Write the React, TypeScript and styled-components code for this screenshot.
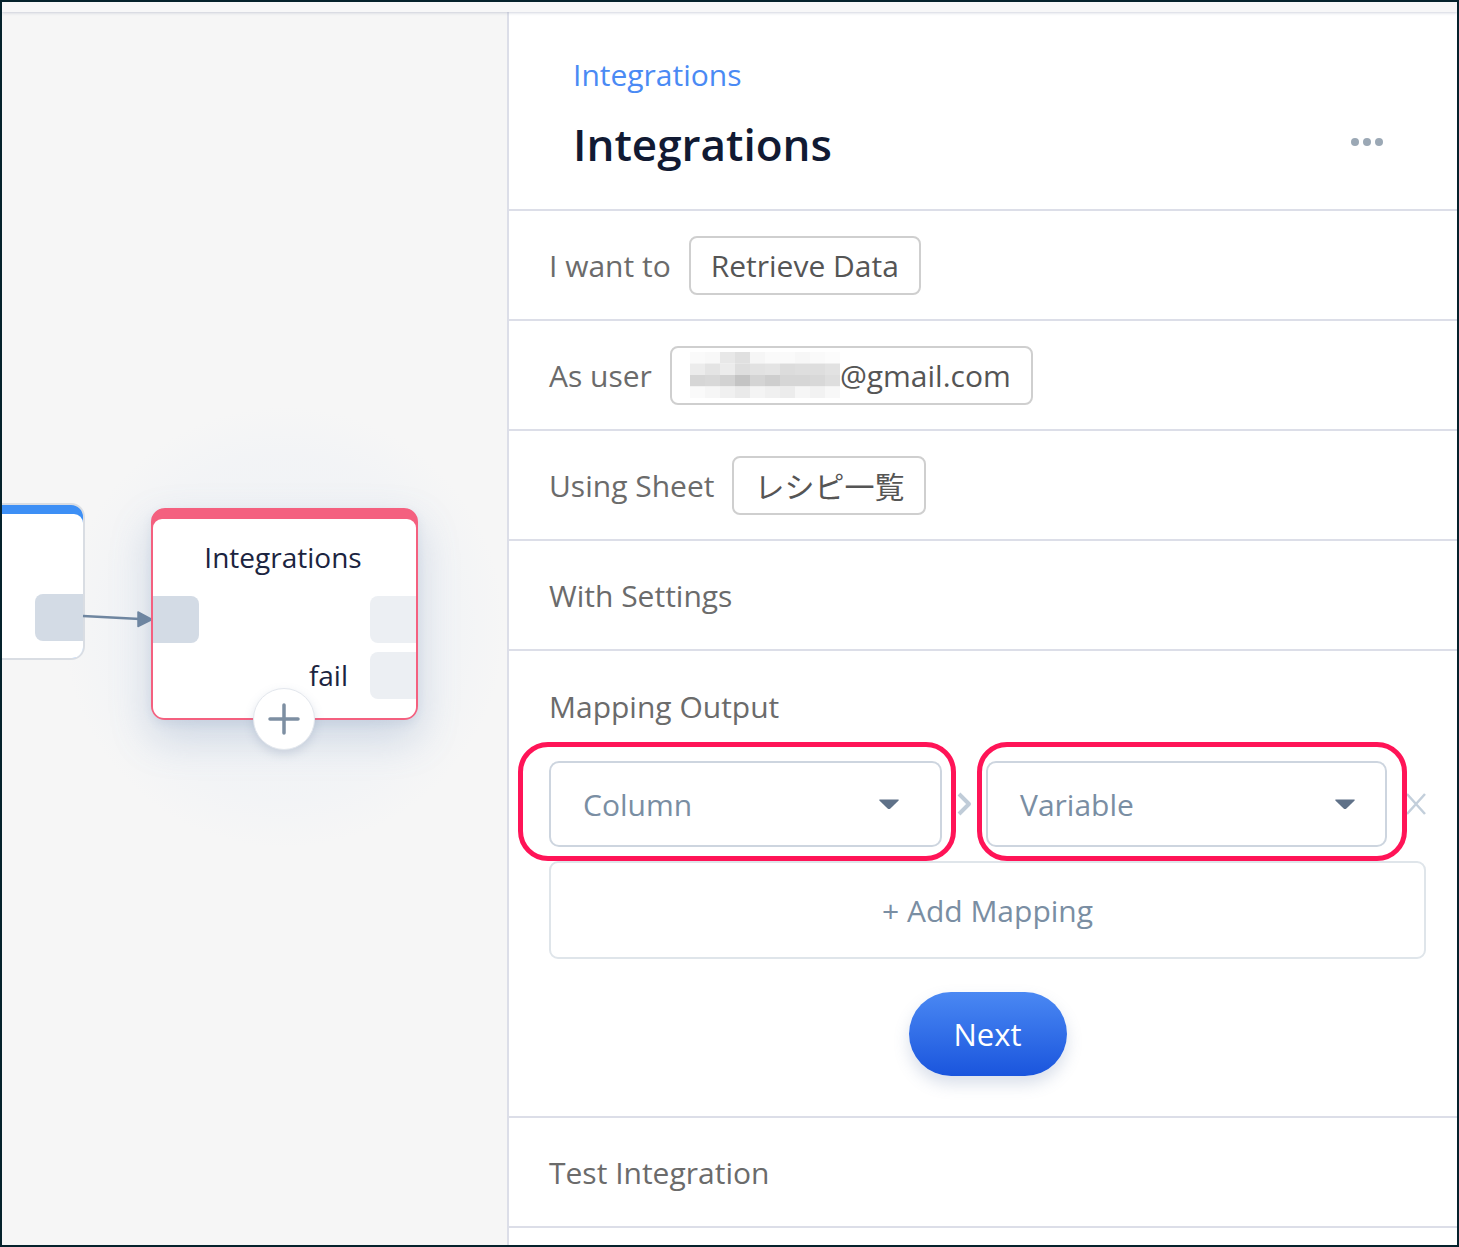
import React from "react";
import styled, { createGlobalStyle } from "styled-components";

const Global = createGlobalStyle`
  html, body { margin: 0; padding: 0; background: #05222c; }
  * { box-sizing: border-box; }
  body { font-family: "Open Sans", "Noto Sans", sans-serif; }
`;

const Frame = styled.div`
  width: 1459px;
  height: 1247px;
  border: 2px solid #05222c;
  display: flex;
  flex-direction: column;
  overflow: hidden;
  background: #fff;
`;

const TopStrip = styled.div`
  height: 10px;
  flex: none;
  background: #f7f7f8;
  box-shadow: 0 1px 3px rgba(150, 160, 185, 0.45);
  position: relative;
  z-index: 2;
`;

const Main = styled.div`
  flex: 1;
  display: flex;
  min-height: 0;
`;

const Canvas = styled.div`
  width: 505px;
  flex: none;
  background: #f6f6f6;
  position: relative;
  overflow: hidden;
`;

const Glow = styled.div`
  position: absolute;
  left: 62px;
  top: 395px;
  width: 440px;
  height: 440px;
  border-radius: 50%;
  background: radial-gradient(circle, rgba(238, 241, 245, 0.95) 0%, rgba(241, 243, 246, 0.7) 55%, rgba(246, 246, 246, 0) 71%);
`;

const NodeShell = styled.div<{ $accent: string; $edge: string }>`
  position: absolute;
  background: ${(p) => p.$accent};
  border: 2px solid ${(p) => p.$edge};
  border-radius: 14px;
  padding-top: 9px;
  display: flex;
`;

const NodeBody = styled.div`
  flex: 1;
  background: #fff;
  border-radius: 9px 9px 11px 11px;
  position: relative;
`;

const PrevNode = styled(NodeShell)`
  left: -40px;
  top: 491px;
  width: 123px;
  height: 157px;
`;

const MainNode = styled(NodeShell)`
  left: 149px;
  top: 496px;
  width: 267px;
  height: 212px;
  box-shadow: 0 18px 40px rgba(110, 140, 180, 0.28), 0 4px 10px rgba(110, 140, 180, 0.12);
`;

const Port = styled.div<{ $tone: string; $side: "left" | "right"; $top: number; $w?: number }>`
  position: absolute;
  top: ${(p) => p.$top}px;
  width: ${(p) => p.$w ?? 46}px;
  height: 47px;
  background: ${(p) => p.$tone};
  ${(p) => (p.$side === "left" ? "left: 0; border-radius: 0 8px 8px 0;" : "right: 0; border-radius: 8px 0 0 8px;")}
`;

const NodeTitle = styled.div`
  text-align: center;
  font-size: 28px;
  color: #1b2440;
  margin-top: 19px;
  padding-right: 3px;
`;

const FailLabel = styled.div`
  position: absolute;
  right: 68px;
  top: 137px;
  font-size: 28px;
  color: #1b2440;
`;

const PlusButton = styled.div`
  position: absolute;
  left: 100px;
  bottom: -32px;
  width: 62px;
  height: 62px;
  border-radius: 50%;
  background: #fff;
  border: 1px solid #e3e7ed;
  box-shadow: 0 4px 10px rgba(120, 140, 170, 0.25);
  display: flex;
  align-items: center;
  justify-content: center;
`;

const Arrow = styled.svg`
  position: absolute;
  left: 80px;
  top: 594px;
`;

const Panel = styled.div`
  flex: 1;
  border-left: 2px solid #dcdee8;
  display: flex;
  flex-direction: column;
  background: #fff;
`;

const Header = styled.div`
  height: 199px;
  flex: none;
  border-bottom: 2px solid #dcdee8;
  padding: 43px 72px 0 64px;
`;

const Breadcrumb = styled.div`
  font-size: 30px;
  color: #4a8af4;
  line-height: 40px;
`;

const TitleRow = styled.div`
  display: flex;
  align-items: center;
  justify-content: space-between;
  margin-top: 19px;
`;

const Title = styled.h1`
  margin: 0;
  font-size: 44px;
  font-weight: 600;
  color: #111a33;
  line-height: 60px;
`;

const Dots = styled.div`
  display: flex;
  gap: 4px;
  margin-right: 2px;
  padding-bottom: 4px;
`;

const Dot = styled.span`
  width: 8px;
  height: 8px;
  border-radius: 50%;
  background: #9ba8b5;
`;

const Row = styled.div`
  height: 110px;
  flex: none;
  border-bottom: 2px solid #dcdee8;
  display: flex;
  align-items: center;
  gap: 18px;
  padding-left: 40px;
`;

const Label = styled.div`
  font-size: 30px;
  color: #6b6b6b;
`;

const ValueBox = styled.div<{ $padLeft?: number }>`
  height: 59px;
  border: 2px solid #cfcfcf;
  border-radius: 8px;
  padding: 0 20px 0 ${(p) => p.$padLeft ?? 20}px;
  display: flex;
  align-items: center;
  font-size: 30px;
  color: #555;
  font-family: "Open Sans", "Noto Sans CJK JP", sans-serif;
`;

const Mosaic = styled.svg`
  display: block;
`;

const MappingSection = styled.div`
  flex: none;
  border-bottom: 2px solid #dcdee8;
  padding: 35px 31px 40px 40px;
  display: flex;
  flex-direction: column;
`;

const MappingRow = styled.div`
  display: flex;
  align-items: center;
  margin-top: 34px;
  position: relative;
`;

const Select = styled.div<{ $w: number; $padRight: number }>`
  width: ${(p) => p.$w}px;
  height: 86px;
  border: 2px solid #cdd5df;
  border-radius: 10px;
  display: flex;
  align-items: center;
  justify-content: space-between;
  padding: 0 ${(p) => p.$padRight}px 0 32px;
  font-size: 30px;
  color: #7a8ea3;
  background: #fff;
`;

const Highlight = styled.div<{ $left: number; $w: number }>`
  position: absolute;
  left: ${(p) => p.$left}px;
  top: -19px;
  width: ${(p) => p.$w}px;
  height: 119px;
  border: 5px solid #ff1457;
  border-radius: 30px;
  pointer-events: none;
`;

const Chevron = styled.svg`
  margin: 0 14px;
  flex: none;
`;

const CloseIcon = styled.svg`
  margin-left: 19px;
  flex: none;
`;

const AddMapping = styled.div`
  margin-top: 14px;
  height: 98px;
  border: 2px solid #dfe5ea;
  border-radius: 9px;
  display: flex;
  align-items: center;
  justify-content: center;
  font-size: 30px;
  color: #7a8ea3;
`;

const NextButton = styled.button`
  align-self: center;
  margin-top: 33px;
  width: 158px;
  height: 84px;
  border: none;
  border-radius: 42px;
  background: linear-gradient(180deg, #4a88f3 0%, #1a55dd 100%);
  color: #fff;
  font-family: "Open Sans", sans-serif;
  font-size: 31px;
  font-weight: 500;
  box-shadow: 0 8px 16px rgba(80, 110, 160, 0.22);
  cursor: pointer;
`;

const mosaic: number[][] = [
  [250, 248, 232, 224, 246, 250, 250, 247, 250, 252],
  [236, 228, 236, 222, 226, 228, 220, 222, 222, 226],
  [214, 216, 210, 196, 212, 206, 214, 214, 216, 222],
  [250, 246, 240, 234, 244, 240, 236, 246, 242, 248],
];

const Caret = () => (
  <svg width="22" height="12" viewBox="0 0 22 12">
    <path d="M2 1.5 H20 Q21.5 1.5 20.4 2.8 L12.4 10.4 Q11 11.7 9.6 10.4 L1.6 2.8 Q0.5 1.5 2 1.5 Z" fill="#5f7188" />
  </svg>
);

export default function App() {
  return (
    <>
      <Global />
      <Frame>
        <TopStrip />
        <Main>
          <Canvas>
            <Glow />
            <PrevNode $accent="#3d8ff5" $edge="#d9dde3">
              <NodeBody>
                <Port $tone="#d3dbe5" $side="right" $top={80} $w={48} />
              </NodeBody>
            </PrevNode>
            <Arrow width="80" height="40" viewBox="0 0 80 40">
              <line x1="1" y1="10" x2="58" y2="13" stroke="#6f86a0" strokeWidth="2.5" />
              <path d="M56 6 L70 13.5 L56 20.5 Z" fill="#6f86a0" strokeLinejoin="round" stroke="#6f86a0" strokeWidth="1.5" />
            </Arrow>
            <MainNode $accent="#f4607f" $edge="#f4607f">
              <NodeBody>
                <NodeTitle>Integrations</NodeTitle>
                <Port $tone="#d3dbe5" $side="left" $top={77} />
                <Port $tone="#eceff3" $side="right" $top={77} />
                <Port $tone="#eceff3" $side="right" $top={133} />
                <FailLabel>fail</FailLabel>
                <PlusButton>
                  <svg width="32" height="32" viewBox="0 0 32 32">
                    <path d="M16 2 V30 M2 16 H30" stroke="#7d8fa2" strokeWidth="3.5" strokeLinecap="round" />
                  </svg>
                </PlusButton>
              </NodeBody>
            </MainNode>
          </Canvas>
          <Panel>
            <Header>
              <Breadcrumb>Integrations</Breadcrumb>
              <TitleRow>
                <Title>Integrations</Title>
                <Dots>
                  <Dot />
                  <Dot />
                  <Dot />
                </Dots>
              </TitleRow>
            </Header>
            <Row>
              <Label>I want to</Label>
              <ValueBox>Retrieve Data</ValueBox>
            </Row>
            <Row>
              <Label>As user</Label>
              <ValueBox $padLeft={18}>
                <Mosaic width="150" height="46" viewBox="0 0 150 46">
                  {mosaic.map((r, ri) =>
                    r.map((g, ci) => (
                      <rect key={`${ri}-${ci}`} x={ci * 15} y={ri * 11.5} width="15" height="11.5" fill={`rgb(${g},${g},${g})`} />
                    ))
                  )}
                </Mosaic>
                @gmail.com
              </ValueBox>
            </Row>
            <Row>
              <Label>Using Sheet</Label>
              <ValueBox>レシピ一覧</ValueBox>
            </Row>
            <Row>
              <Label>With Settings</Label>
            </Row>
            <MappingSection>
              <Label>Mapping Output</Label>
              <MappingRow>
                <Select $w={393} $padRight={40}>
                  Column
                  <Caret />
                </Select>
                <Chevron width="16" height="24" viewBox="0 0 16 24">
                  <path d="M3 2 L13 12 L3 22" fill="none" stroke="#c0ccd8" strokeWidth="4" strokeLinejoin="round" />
                </Chevron>
                <Select $w={401} $padRight={29}>
                  Variable
                  <Caret />
                </Select>
                <CloseIcon width="20" height="24" viewBox="0 0 20 24">
                  <path d="M1 2 L19 22 M19 2 L1 22" stroke="#c3cfdb" strokeWidth="2.5" />
                </CloseIcon>
                <Highlight $left={-31} $w={438} />
                <Highlight $left={428} $w={430} />
              </MappingRow>
              <AddMapping>+ Add Mapping</AddMapping>
              <NextButton>Next</NextButton>
            </MappingSection>
            <Row>
              <Label>Test Integration</Label>
            </Row>
          </Panel>
        </Main>
      </Frame>
    </>
  );
}
